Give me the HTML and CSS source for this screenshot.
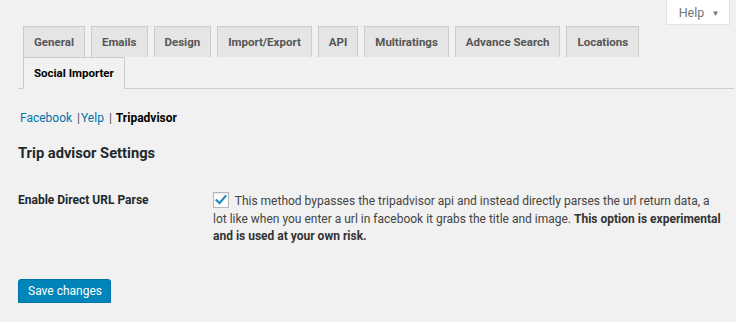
FILE: index.html
```html
<!DOCTYPE html>
<html lang="en">
<head>
    <meta charset="UTF-8">
    <meta name="viewport" content="width=device-width, initial-scale=1.0">
    <title>Social Importer Settings</title>
    <link rel="stylesheet" href="styles.css">
</head>
<body>
    <div class="screen-meta">
        <button class="help-toggle" type="button">Help <span class="caret">&#9660;</span></button>
    </div>

    <div class="wrap">
        <nav class="nav-tabs">
            <a class="nav-tab" href="#">General</a>
            <a class="nav-tab" href="#">Emails</a>
            <a class="nav-tab" href="#">Design</a>
            <a class="nav-tab" href="#">Import/Export</a>
            <a class="nav-tab" href="#">API</a>
            <a class="nav-tab" href="#">Multiratings</a>
            <a class="nav-tab" href="#">Advance Search</a>
            <a class="nav-tab" href="#">Locations</a>
            <a class="nav-tab active" href="#">Social Importer</a>
        </nav>

        <div class="subsub">
            <a href="#">Facebook</a> <span class="sep">|</span><a href="#">Yelp</a> <span class="sep">|</span> <span class="current">Tripadvisor</span>
        </div>

        <h2 class="section-title">Trip advisor Settings</h2>

        <form class="settings-form">
            <div class="form-row">
                <div class="form-label">Enable Direct URL Parse</div>
                <div class="form-field">
                    <p>
                        <span class="checkbox">
                            <svg viewBox="0 0 16 16" width="16" height="16"><path d="M3.6 8.2l3 3 5.8-7" fill="none" stroke="#1e8cbe" stroke-width="2.2" stroke-linecap="square"/></svg>
                        </span>
                        This method bypasses the tripadvisor api and instead directly parses the url return data, a lot like when you enter a url in facebook it grabs the title and image. <strong>This option is experimental and is used at your own risk.</strong>
                    </p>
                </div>
            </div>
            <button type="submit" class="save-btn">Save changes</button>
        </form>
    </div>
</body>
</html>
```

FILE: styles.css
```css
body {
    margin: 0;
    background-color: #f1f1f1;
    font-family: Roboto, "Liberation Sans", sans-serif;
    font-size: 12px;
    color: #444;
}
.screen-meta {
    display: flex;
    justify-content: flex-end;
    height: 26px;
    padding-right: 6px;
}
.help-toggle {
    height: 25px;
    width: 64px;
    padding: 0 0 0 2px;
    background: #fff;
    border: 1px solid #e2e2e2;
    border-top: none;
    font-family: inherit;
    font-size: 12.5px;
    color: #72777c;
    cursor: pointer;
}
.help-toggle .caret {
    font-size: 8px;
    margin-left: 4px;
    vertical-align: 1px;
}
.wrap {
    margin: 0 2px 0 18px;
}
.nav-tabs {
    display: flex;
    flex-wrap: wrap;
    padding-left: 5px;
    border-bottom: 1px solid #ccc;
}
.nav-tab {
    display: block;
    margin-right: 6px;
    padding: 5px 10px;
    line-height: 20px;
    border: 1px solid #ccc;
    border-bottom: none;
    background: #e5e5e5;
    color: #555;
    font-size: 11.5px;
    font-weight: 700;
    text-decoration: none;
}
.nav-tab.active {
    background: #f1f1f1;
    color: #000;
    margin-bottom: -1px;
    border-bottom: 1px solid #f1f1f1;
}
.subsub {
    margin: 20px 0 0 2px;
    line-height: 18px;
    color: #555;
}
.subsub a {
    color: #0073aa;
    text-decoration: none;
}
.subsub .sep {
    margin: 0 1px 0 2px;
}
.subsub .current {
    color: #000;
    font-weight: 700;
}
.section-title {
    margin: 16px 0 0;
    font-size: 14.7px;
    font-weight: 700;
    color: #23282d;
    line-height: 20px;
}
.form-row {
    display: grid;
    grid-template-columns: 195px 1fr;
    margin-top: 29px;
    padding-right: 10px;
}
.form-label {
    font-weight: 700;
    color: #23282d;
    line-height: 17.5px;
}
.form-field p {
    margin: 0;
    line-height: 17.5px;
}
.form-field strong {
    color: #333;
}
.checkbox {
    display: inline-block;
    width: 14px;
    height: 14px;
    margin-right: 3px;
    vertical-align: -3px;
    background: #fff;
    border: 1px solid #b4b9be;
    box-shadow: inset 0 1px 2px rgba(0,0,0,0.1);
    position: relative;
}
.checkbox svg {
    position: absolute;
    left: -1px;
    top: -1px;
}
.save-btn {
    margin-top: 33px;
    height: 24px;
    padding: 0 8px 0 9px;
    background: #0085ba;
    border: 1px solid #0073aa;
    border-radius: 3px;
    box-shadow: 0 1px 0 #006799;
    color: #fff;
    font-family: inherit;
    font-size: 12px;
    cursor: pointer;
}
```
